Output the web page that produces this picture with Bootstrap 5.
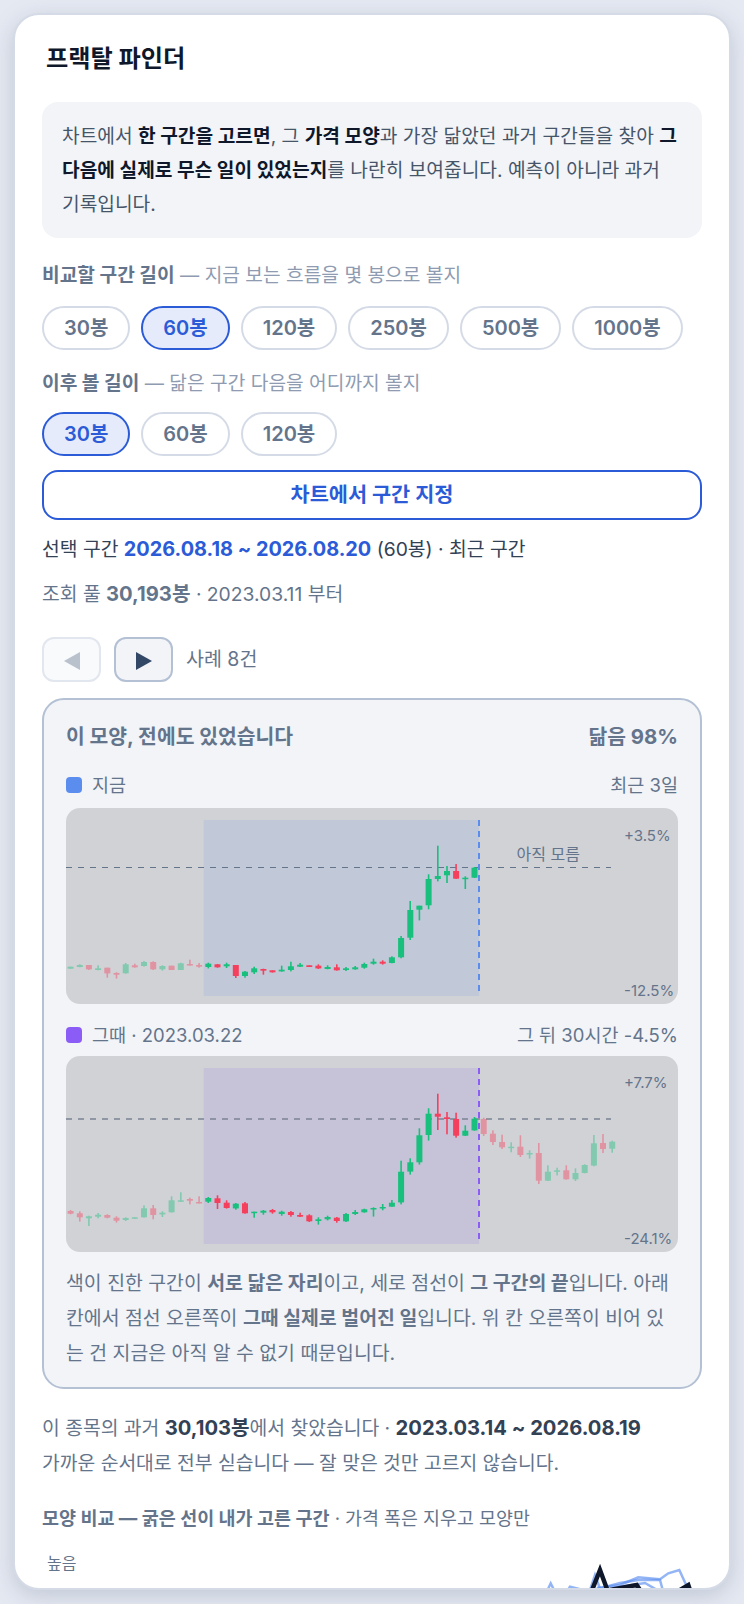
<!DOCTYPE html>
<html lang="ko">
<head>
<meta charset="utf-8">
<title>프랙탈 파인더</title>
<link href="https://cdn.jsdelivr.net/npm/bootstrap@5.3.0/dist/css/bootstrap.min.css" rel="stylesheet">
<style>
html,body{height:100%}
body{background:#e5e9f2;padding:13px;overflow:hidden;font-family:Inter,"Noto Sans CJK KR",sans-serif;color:#475569}
.pf-shell{width:718px;height:1577px;background:#fff;border:2px solid #d5dbe6;border-radius:26px;box-shadow:0 6px 22px rgba(100,116,139,.28);padding:27px;overflow:hidden}
.pf-title{font-size:24.2px;line-height:34px;font-weight:700;color:#0f172a;margin:0 0 26px 4px}
.pf-intro{background:#f2f4f8;border-radius:16px;padding:17px 20px;font-size:19.2px;line-height:34px;color:#475569;margin-bottom:20px}
.pf-intro b{color:#0f172a;font-weight:700}
.pf-label{font-size:19.2px;line-height:34px;color:#8e9bb0;margin-bottom:14px}
.pf-label.pf-second{margin-top:16px;margin-bottom:12px}
.pf-label b{color:#64748b;font-weight:700}
.pf-pill{height:44px;padding:0 20px;border:2px solid #d5dbe6;background:#fff;color:#64748b;font-size:20px;font-weight:600;border-radius:22px;line-height:1}
.pf-pill.is-on{background:#e5ebfa;border-color:#2b5bd7;color:#2b5bd7}
.pf-row{gap:11px}
.pf-full{height:50px;border:2px solid #2b5bd7;border-radius:16px;background:#fff;color:#2b5bd7;font-size:20.8px;font-weight:700;margin-top:14px;padding:0}
.pf-sel{font-size:19.3px;line-height:34px;color:#334155;margin-top:12px}
.pf-sel b{color:#2b5bd7;font-weight:700;font-size:19.9px}
.pf-pool{font-size:19.3px;line-height:34px;color:#64748b;margin-top:11px}
.pf-pool b{font-weight:700;font-size:20.2px}
.pf-nav{margin-top:26px;gap:13px}
.pf-arrow{width:59px;height:45px;border:2px solid #b4c0d4;border-radius:12px;background:#f2f4f8;padding:0}
.pf-arrow:disabled{border-color:#e2e6ee;background:#f9fafc;opacity:1}
.pf-count{font-size:19.5px;color:#64748b}
.pf-case{margin-top:16px;height:691px;background:#f2f4f8;border:2px solid #b4c0d4;border-radius:22px;padding:22px 22px 0}
.pf-case-head{font-size:20.4px;line-height:30px;font-weight:700;color:#64748b;margin-bottom:18px}
.pf-legend{font-size:18.5px;line-height:30px;color:#64748b;margin-bottom:8px}
.pf-legend.pf-tight{margin-bottom:6px}
.pf-key{gap:10px}
.pf-dot{width:16px;height:16px;border-radius:4px;display:inline-block}
.pf-chart{display:block;width:612px;height:196px;border-radius:14px;background:#d1d2d6}
.pf-gap{height:16px}
.pf-caption{font-size:19.4px;line-height:35px;color:#64748b;margin-top:14px}
.pf-caption b{font-weight:700}
.pf-foot{font-size:19.3px;line-height:35px;color:#64748b;margin-top:21px}
.pf-foot b{color:#334155;font-weight:700;font-size:20.2px}
.pf-shape{font-size:18.4px;line-height:34px;color:#64748b;margin-top:20px}
.pf-shape b{font-weight:700;font-size:18.5px}
.pf-plot{height:60px;margin-top:17px}
.pf-high{font-size:16px;color:#64748b;margin-left:5px;line-height:22px}
.pf-spark{position:absolute;left:0;top:0;overflow:visible}
svg text{font-family:Inter,"Noto Sans CJK KR",sans-serif;font-size:15px;fill:#64748b}
svg text.pf-unknown{font-size:16px}
</style>
</head>
<body>
<div class="pf-shell">
  <h1 class="pf-title">프랙탈 파인더</h1>
  <div class="pf-intro">차트에서 <b>한 구간을 고르면</b>, 그 <b>가격 모양</b>과 가장 닮았던 과거 구간들을 찾아 <b>그 다음에 실제로 무슨 일이 있었는지</b>를 나란히 보여줍니다. 예측이 아니라 과거 기록입니다.</div>
  <div class="pf-label"><b>비교할 구간 길이</b> — 지금 보는 흐름을 몇 봉으로 볼지</div>
  <div class="d-flex pf-row">
    <button class="btn pf-pill">30봉</button>
    <button class="btn pf-pill is-on">60봉</button>
    <button class="btn pf-pill">120봉</button>
    <button class="btn pf-pill">250봉</button>
    <button class="btn pf-pill">500봉</button>
    <button class="btn pf-pill">1000봉</button>
  </div>
  <div class="pf-label pf-second"><b>이후 볼 길이</b> — 닮은 구간 다음을 어디까지 볼지</div>
  <div class="d-flex pf-row">
    <button class="btn pf-pill is-on">30봉</button>
    <button class="btn pf-pill">60봉</button>
    <button class="btn pf-pill">120봉</button>
  </div>
  <button class="btn pf-full w-100 d-block">차트에서 구간 지정</button>
  <div class="pf-sel">선택 구간 <b>2026.08.18 ~ 2026.08.20</b> (60봉) · 최근 구간</div>
  <div class="pf-pool">조회 풀 <b>30,193봉</b> · 2023.03.11 부터</div>
  <div class="d-flex align-items-center pf-nav">
    <button class="btn pf-arrow" disabled aria-label="이전"><svg width="18" height="20" viewBox="0 0 18 20"><path d="M17 1V19L1 10Z" fill="#b8c1cc"/></svg></button>
    <button class="btn pf-arrow" aria-label="다음"><svg width="18" height="20" viewBox="0 0 18 20"><path d="M1 1V19L17 10Z" fill="#334766"/></svg></button>
    <span class="pf-count">사례 8건</span>
  </div>
  <div class="pf-case">
    <div class="d-flex justify-content-between pf-case-head"><span>이 모양, 전에도 있었습니다</span><span>닮음 98%</span></div>
    <div class="d-flex justify-content-between pf-legend"><span class="d-flex align-items-center pf-key"><i class="pf-dot" style="background:#5b8def"></i>지금</span><span>최근 3일</span></div>
    <svg class="pf-chart" id="chartA" viewBox="0 0 612 196"></svg>
    <div class="pf-gap"></div>
    <div class="d-flex justify-content-between pf-legend pf-tight"><span class="d-flex align-items-center pf-key"><i class="pf-dot" style="background:#8b5cf6"></i>그때 · 2023.03.22</span><span>그 뒤 30시간 -4.5%</span></div>
    <svg class="pf-chart" id="chartB" viewBox="0 0 612 196"></svg>
    <div class="pf-caption">색이 진한 구간이 <b>서로 닮은 자리</b>이고, 세로 점선이 <b>그 구간의 끝</b>입니다. 아래 칸에서 점선 오른쪽이 <b>그때 실제로 벌어진 일</b>입니다. 위 칸 오른쪽이 비어 있는 건 지금은 아직 알 수 없기 때문입니다.</div>
  </div>
  <div class="pf-foot">이 종목의 과거 <b>30,103봉</b>에서 찾았습니다 · <b>2023.03.14 ~ 2026.08.19</b><br>가까운 순서대로 전부 싣습니다 — 잘 맞은 것만 고르지 않습니다.</div>
  <div class="pf-shape"><b>모양 비교 — 굵은 선이 내가 고른 구간</b> · 가격 폭은 지우고 모양만</div>
  <div class="pf-plot position-relative">
    <div class="pf-high">높음</div>
    <svg class="pf-spark" width="660" height="60" viewBox="0 0 660 60">
      <g fill="none" stroke="#5b8def" stroke-opacity=".65" stroke-width="2.5" stroke-linejoin="miter">
        <polyline points="500,50 508.7,31.3 518,50"/>
        <polyline points="518,50 528,34.7 541.3,38 548,42"/>
        <polyline points="544,50 553,23 560,42"/>
        <polyline points="554.7,36 578,33 596.3,25.3 618,27.3 626.3,21.3 637.3,18 652,50"/>
        <polyline points="552,38 578,31 596.3,28 618,28 624,50"/>
        <polyline points="570,36 603,31 622,42"/>
      </g>
      <g fill="none" stroke="#0f172a" stroke-width="4.5" stroke-linejoin="miter">
        <polyline points="543,56 558,18 572,56"/>
        <polyline points="568,38 594.7,33 606,50"/>
        <polyline points="628,44 646.3,33 652,50"/>
      </g>
    </svg>
  </div>
</div>
<script src="https://cdn.jsdelivr.net/npm/bootstrap@5.3.0/dist/js/bootstrap.bundle.min.js"></script>
<script>
var A=[[0,560,566,560,566],[0,555,561,553,562],[1,555,568,555,570],[0,565,570,556,571],[1,563,580,563,593],[1,579,584,577,596],[0,553,580,549,581],[1,556,562,551,563],[0,546,558,543,560],[1,546,568,544,570],[0,558,568,556,572],[1,557,570,557,570],[0,550,570,548,570],[1,552,556,539,557],[1,555,560,549,563],[0,551,561,548,565],[1,553,562,552,563],[0,553,559,548,564],[1,555,588,555,594],[0,575,588,573,593],[0,565,577,560,582],[1,567,572,566,584],[1,571,577,571,578],[0,569,574,557,575],[0,559,570,545,574],[0,554,560,549,561],[1,556,561,556,561],[1,557,565,553,567],[0,561,567,556,568],[1,562,571,553,572],[0,565,570,561,573],[0,562,568,558,569],[0,552,563,548,566],[0,545,551,536,554],[1,545,551,541,554],[0,532,549,529,550],[0,474,532,468,535],[0,390,473,363,480],[0,377,389,377,421],[0,297,376,283,388],[0,288,297,197,304],[0,273,286,258,309],[1,273,296,252,297],[0,293,297,289,327],[0,263,293,261,294]];
var B=[[1,573,581,570,583],[1,580,592,574,605],[0,589,595,587,618],[0,584,590,579,595],[1,585,593,583,595],[1,593,602,589,608],[0,594,600,592,603],[0,592,595,592,596],[0,565,592,556,593],[1,565,585,555,598],[0,578,583,574,591],[0,541,577,529,578],[0,541,544,517,545],[1,537,542,533,553],[1,546,549,529,550],[0,534,545,531,549],[1,535,549,526,567],[1,548,564,541,566],[0,551,565,549,569],[1,550,580,546,581],[0,575,578,575,593],[0,572,578,570,584],[1,570,577,567,581],[0,575,582,572,587],[1,576,585,573,590],[1,585,590,578,591],[1,586,604,583,606],[0,598,603,592,614],[0,591,598,587,601],[1,593,603,591,608],[0,582,604,579,606],[0,576,582,570,585],[0,568,577,566,578],[0,564,567,562,590],[0,561,565,552,571],[0,548,560,540,560],[0,455,547,422,553],[0,427,455,415,464],[0,346,427,325,434],[0,281,345,265,362],[1,281,290,221,330],[1,292,297,276,343],[1,297,347,278,353],[0,332,347,316,348],[0,296,331,291,332],[1,297,342,293,348],[1,341,366,331,375],[1,366,382,344,387],[0,380,384,367,397],[1,380,405,346,411],[0,399,403,391,416],[1,399,482,369,492],[0,455,482,436,483],[0,451,455,443,466],[1,451,478,436,479],[0,459,478,445,483],[0,435,459,433,460],[0,370,437,345,439],[1,369,387,342,399],[0,365,386,362,398]];
function draw(id,data,base,top,lineY,sel,vline,lineW,lineC,labels){
  var slot=9.18,s='';
  s+='<rect x="137.7" y="12" width="275.4" height="176" fill="'+sel+'"/>';
  s+='<line x1="0" x2="545" y1="'+lineY+'" y2="'+lineY+'" stroke="'+lineC+'" stroke-width="'+lineW+'" stroke-dasharray="6 6"/>';
  data.forEach(function(d,i){
    var c=d[0]?'#f5405d':'#19bf7c',x=slot*(i+.5),o=(i<15||i>=45)?' opacity=".42"':'';
    var y=function(z){return (base+z/3-top).toFixed(1)};
    s+='<g'+o+' fill="'+c+'"><rect x="'+(x-.8).toFixed(1)+'" y="'+y(d[3])+'" width="1.6" height="'+((d[4]-d[3])/3).toFixed(1)+'"/>';
    s+='<rect x="'+(x-3).toFixed(1)+'" y="'+y(d[1])+'" width="6" height="'+Math.max(1.5,(d[2]-d[1])/3).toFixed(1)+'"/></g>';
  });
  s+='<line x1="413" x2="413" y1="12" y2="188" stroke="'+vline+'" stroke-width="2" stroke-dasharray="6 5"/>';
  labels.forEach(function(l){s+='<text x="'+l[0]+'" y="'+l[1]+'"'+(l[3]?' class="'+l[3]+'"':'')+'>'+l[2]+'</text>'});
  document.getElementById(id).innerHTML=s;
}
draw('chartA',A,780,808,59.5,'#c1c8d8','#5b8def',1,'#64748b',[[558,33,'+3.5%'],[558,188,'-12.5%'],[450.5,52,'아직 모름','pf-unknown']]);
draw('chartB',B,1020,1056,63,'#c6c3d8','#8b5cf6',1.5,'#7b8494',[[558,32,'+7.7%'],[558,188,'-24.1%']]);
</script>
</body>
</html>
